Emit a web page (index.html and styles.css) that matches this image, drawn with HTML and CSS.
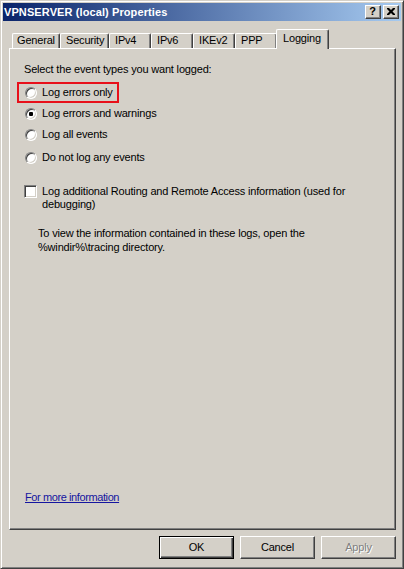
FILE: index.html
```html
<!DOCTYPE html>
<html>
<head>
<meta charset="utf-8">
<link rel="stylesheet" href="styles.css">
</head>
<body>
<div class="window">
  <div class="titlebar">
    <span class="title">VPNSERVER (local) Properties</span>
    <div class="tbuttons">
      <div class="tbtn"><span class="q">?</span></div>
      <div class="tbtn">
        <svg width="8" height="7" viewBox="0 0 8 7"><path d="M0 0h2l2 2 2-2h2v1l-2.5 2.5L8 6v1H6L4 5 2 7H0V6l2.5-2.5L0 1z" fill="#000"/></svg>
      </div>
    </div>
  </div>

  <div class="tabs">
    <div class="tab w-general">General</div>
    <div class="tab w-security">Security</div>
    <div class="tab w-small">IPv4</div>
    <div class="tab w-small">IPv6</div>
    <div class="tab w-small">IKEv2</div>
    <div class="tab w-small">PPP</div>
    <div class="tab selected">Logging</div>
  </div>

  <div class="panel">
    <div class="highlight"></div>
    <div class="label">Select the event types you want logged:</div>
    <div class="radios">
      <div class="opt"><span class="radio"></span><span>Log errors only</span></div>
      <div class="opt"><span class="radio checked"></span><span>Log errors and warnings</span></div>
      <div class="opt"><span class="radio"></span><span>Log all events</span></div>
      <div class="opt"><span class="radio"></span><span>Do not log any events</span></div>
    </div>
    <div class="check-row">
      <span class="checkbox"></span>
      <span class="check-text">Log additional Routing and Remote Access information (used for debugging)</span>
    </div>
    <div class="note">To view the information contained in these logs, open the<br>%windir%\tracing directory.</div>
    <a class="link" href="#">For more information</a>
  </div>

  <div class="footer">
    <div class="btn default"><span>OK</span></div>
    <div class="btn"><span>Cancel</span></div>
    <div class="btn disabled"><span>Apply</span></div>
  </div>
</div>
</body>
</html>
```

FILE: styles.css
```css
* { box-sizing: border-box; }
html, body { margin: 0; padding: 0; }
body {
  width: 404px;
  height: 569px;
  background: #d4d0c8;
  font-family: "Liberation Sans", Arial, sans-serif;
  font-size: 11px;
  letter-spacing: -0.18px;
  color: #000;
  overflow: hidden;
}
.window {
  width: 404px;
  height: 569px;
  border: 1px solid;
  border-color: #d4d0c8 #404040 #404040 #d4d0c8;
  padding: 2px;
  box-shadow: inset 1px 1px #fff, inset -1px -1px #808080;
  background: #d4d0c8;
  display: flex;
  flex-direction: column;
}
.titlebar {
  height: 18px;
  flex: none;
  background: linear-gradient(to right, #0a246a, #a6caf0);
  display: flex;
  align-items: center;
  justify-content: space-between;
  padding: 0 2px 0 1px;
}
.title {
  color: #fff;
  font-weight: bold;
  font-size: 11px;
  line-height: 13px;
  letter-spacing: 0.1px;
}
.tbuttons { display: flex; gap: 2px; }
.tbtn {
  width: 16px;
  height: 14px;
  background: #d4d0c8;
  border: 1px solid;
  border-color: #fff #404040 #404040 #fff;
  box-shadow: inset -1px -1px #808080;
  display: flex;
  align-items: center;
  justify-content: center;
}
.tbtn svg { display: block; margin-left: -1px; margin-top: -1px; }
.q {
  font-weight: bold;
  font-size: 11px;
  line-height: 11px;
  margin-left: -1px;
  margin-top: -1px;
}

.tabs {
  flex: none;
  display: flex;
  align-items: flex-end;
  height: 20px;
  margin: 8px 0 -1px 9px;
}
.tab {
  height: 15px;
  margin-bottom: 1px;
  border: 1px solid;
  border-bottom: none;
  border-color: #fff #404040 #404040 #fff;
  border-radius: 2px 2px 0 0;
  box-shadow: inset -1px 0 #808080;
  padding-left: 5px;
  line-height: 13px;
  white-space: nowrap;
  background: #d4d0c8;
}
.w-general { width: 48px; padding-left: 4px; }
.w-security { width: 49px; }
.w-small { width: 42px; }
.tab.selected {
  position: relative;
  z-index: 1;
  width: 53px;
  height: 20px;
  margin: 0 0 0 -1px;
  padding-left: 6px;
  line-height: 17px;
}

.panel {
  position: relative;
  flex: none;
  height: 482px;
  margin: 0 5px 0 6px;
  border: 1px solid;
  border-color: #fff #404040 #404040 #fff;
  box-shadow: inset -1px -1px #808080;
  padding: 14px 0 25px 14px;
  display: flex;
  flex-direction: column;
  align-items: flex-start;
  line-height: 13px;
}
.highlight {
  position: absolute;
  left: 7px;
  top: 33px;
  width: 102px;
  height: 21px;
  border: 2px solid #e8101a;
}
.radios { margin-top: 6px; }
.opt {
  height: 21px;
  display: flex;
  align-items: center;
  gap: 5px;
  padding-left: 1px;
}
.opt:last-child { height: 23px; padding-top: 2px; }
.radio {
  position: relative;
  width: 12px;
  height: 12px;
  border-radius: 50%;
  background: #fff;
  border: 1px solid;
  border-color: #808080 #fff #fff #808080;
  box-shadow: inset 1px 1px #404040, inset -1px -1px #d4d0c8;
}
.radio.checked::after {
  content: "";
  position: absolute;
  left: 3px;
  top: 3px;
  width: 4px;
  height: 4px;
  border-radius: 1px;
  background: #000;
}
.check-row {
  margin-top: 17px;
  display: flex;
  align-items: flex-start;
  gap: 5px;
  width: 340px;
}
.checkbox {
  flex: none;
  width: 13px;
  height: 13px;
  background: #fff;
  border: 1px solid;
  border-color: #808080 #fff #fff #808080;
  box-shadow: inset 1px 1px #404040, inset -1px -1px #d4d0c8;
}
.check-text { line-height: 13px; padding-top: 0; }
.note {
  margin-top: 15px;
  margin-left: 14px;
  line-height: 14px;
}
.link {
  margin-top: auto;
  margin-left: 1px;
  color: #1515a0;
  text-decoration: underline;
  letter-spacing: -0.4px;
}

.footer {
  flex: none;
  display: flex;
  justify-content: flex-end;
  gap: 6px;
  margin: 6px 5px 0 6px;
}
.btn {
  width: 75px;
  height: 23px;
  border: 1px solid;
  border-color: #fff #404040 #404040 #fff;
  box-shadow: inset -1px -1px #808080;
  display: flex;
  align-items: center;
  justify-content: center;
  line-height: 13px;
}
.btn.default {
  border: 1px solid #000;
  box-shadow: inset 1px 1px #fff, inset -1px -1px #404040, inset -2px -2px #808080;
}
.btn.disabled span {
  color: #808080;
  text-shadow: 1px 1px #fff;
}
```
